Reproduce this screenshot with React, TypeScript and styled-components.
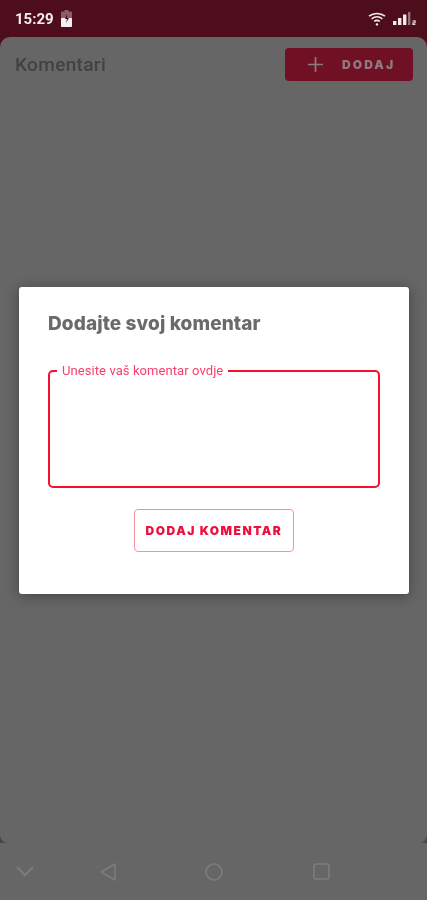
import styled, { createGlobalStyle } from 'styled-components'

const GlobalStyle = createGlobalStyle`
  html, body {
    margin: 0;
    padding: 0;
    background: #666666;
  }
`

const Screen = styled.div`
  position: relative;
  display: flex;
  flex-direction: column;
  width: 427px;
  height: 900px;
  overflow: hidden;
  font-family: Roboto, 'Liberation Sans', sans-serif;
  background: #666666;
`

const StatusBar = styled.div`
  display: flex;
  align-items: center;
  justify-content: space-between;
  flex: none;
  height: 37px;
  padding: 0 11px 0 15px;
  box-sizing: border-box;
  background: #4e0d1c;
`

const StatusGroup = styled.div<{ gap: number }>`
  display: flex;
  align-items: center;
  gap: ${(p) => p.gap}px;
  filter: blur(0.5px);
`

const Time = styled.span`
  font-size: 15px;
  font-weight: 700;
  color: #f4eef0;
`

const PageSlot = styled.div`
  flex: none;
  height: 806px;
  background: linear-gradient(#4e0d1c 50%, #474747 50%);
`

const Page = styled.div`
  height: 100%;
  border-radius: 10px 10px 8px 8px;
  background: #666666;
`

const Header = styled.div`
  display: flex;
  align-items: center;
  justify-content: space-between;
  padding: 11px 14px 0 15px;
  filter: blur(0.6px);
`

const Title = styled.h1`
  margin: 0;
  font-size: 19px;
  font-weight: 500;
  letter-spacing: 0.35px;
  color: #424242;
`

const AddButton = styled.div`
  display: flex;
  align-items: center;
  width: 128px;
  height: 33px;
  padding-left: 23px;
  gap: 19px;
  box-sizing: border-box;
  border-radius: 4px;
  background: #6f1025;
`

const AddLabel = styled.span`
  font-family: Inter, sans-serif;
  font-size: 12px;
  font-weight: 900;
  letter-spacing: 2.1px;
  color: #8f7a80;
`

const NavBar = styled.div`
  display: grid;
  grid-template-columns: 84px 105px 108px auto;
  align-items: center;
  flex: 1;
  padding: 0 0 0 16px;
  filter: blur(0.5px);
`

const Overlay = styled.div`
  position: absolute;
  top: 287px;
  left: 19px;
`

const Dialog = styled.div`
  display: flex;
  flex-direction: column;
  width: 390px;
  height: 307px;
  padding: 26px 29px 0;
  box-sizing: border-box;
  border-radius: 3px;
  background: #ffffff;
  box-shadow: 0 2px 14px rgba(0, 0, 0, 0.35);
`

const DialogTitle = styled.h2`
  margin: 0;
  font-family: Inter, sans-serif;
  font-size: 19px;
  line-height: 22px;
  font-weight: 800;
  letter-spacing: 0.1px;
  color: #6a6a6a;
  filter: blur(0.5px);
`

const Field = styled.fieldset`
  flex: none;
  width: 332px;
  height: 124px;
  margin: 29px 0 0;
  padding: 0 0 0 7px;
  box-sizing: border-box;
  border: 2px solid #f90f2e;
  border-radius: 5px;
`

const FieldLabel = styled.legend`
  padding: 0 5px;
  font-size: 13px;
  line-height: 14px;
  letter-spacing: 0.08px;
  color: #f8406a;
  filter: blur(0.4px);
`

const SubmitButton = styled.div`
  display: flex;
  align-items: center;
  justify-content: center;
  align-self: center;
  width: 160px;
  height: 43px;
  margin-top: 21px;
  box-sizing: border-box;
  border: 1px solid #fb8fa2;
  border-radius: 4px;
`

const SubmitLabel = styled.span`
  font-family: Inter, sans-serif;
  font-size: 12px;
  font-weight: 900;
  letter-spacing: 1.5px;
  color: #ee0f3c;
  filter: blur(0.4px);
`

function WifiIcon() {
  return (
    <svg width="18" height="14" viewBox="0 0 18 14" fill="none" stroke="#f2ecee" strokeWidth="1.6">
      <path d="M1 4.2C5.6 .6 12.4 .6 17 4.2" />
      <path d="M3.6 6.8C6.8 4.4 11.2 4.4 14.4 6.8" />
      <path d="M6.2 9.4C7.9 8.2 10.1 8.2 11.8 9.4" />
      <circle cx="9" cy="12.4" r="1.2" fill="#f2ecee" stroke="none" />
    </svg>
  )
}

function SignalIcon() {
  return (
    <svg width="23" height="13" viewBox="0 0 23 13" fill="#f2ecee">
      <rect x="0" y="9" width="3.4" height="4" />
      <rect x="5" y="6" width="3.4" height="7" />
      <rect x="10" y="2.5" width="3.4" height="10.5" />
      <rect x="15" y="0" width="2.4" height="13" opacity="0.45" />
      <rect x="19.5" y="8.5" width="3" height="1" />
      <rect x="21.5" y="8.5" width="1" height="2.5" />
      <rect x="19.5" y="10.5" width="3" height="1" />
      <rect x="19.5" y="10.5" width="1" height="2.5" />
      <rect x="19.5" y="12.2" width="3" height="0.8" />
    </svg>
  )
}

function BatteryIcon() {
  return (
    <svg width="11" height="17" viewBox="0 0 11 17">
      <path d="M3.5 0h4v1.5H10a1 1 0 0 1 1 1V16a1 1 0 0 1-1 1H1a1 1 0 0 1-1-1V2.500a1 1 0 0 1 1-1h2.500z" fill="#8a5f6a" />
      <rect x="0" y="8" width="11" height="9" rx="1" fill="#f4eef0" />
      <path d="M6 4 4 9h2l-1 4 3-5H6z" fill="#4e0d1c" />
    </svg>
  )
}

function PlusIcon() {
  return (
    <svg width="15" height="15" viewBox="0 0 15 15" stroke="#8f7a80" strokeWidth="1.7">
      <path d="M7.500 0v15M0 7.500h15" />
    </svg>
  )
}

const navStroke = '#7d7d7d'

function NavChevron() {
  return (
    <svg width="18" height="11" viewBox="0 0 18 11" fill="none" stroke={navStroke} strokeWidth="2">
      <path d="M1 1l8 8 8-8" />
    </svg>
  )
}

function NavBack() {
  return (
    <svg width="16" height="18" viewBox="0 0 16 18" fill="none" stroke={navStroke} strokeWidth="1.600">
      <path d="M15 1v16L1 9z" strokeLinejoin="round" />
    </svg>
  )
}

function NavHome() {
  return (
    <svg width="18" height="18" viewBox="0 0 18 18" fill="none" stroke={navStroke} strokeWidth="1.600">
      <circle cx="9" cy="9" r="8" />
    </svg>
  )
}

function NavRecent() {
  return (
    <svg width="17" height="17" viewBox="0 0 17 17" fill="none" stroke={navStroke} strokeWidth="1.600">
      <rect x="1" y="1" width="15" height="15" rx="2" />
    </svg>
  )
}

export default function App() {
  return (
    <Screen>
      <GlobalStyle />
      <StatusBar>
        <StatusGroup gap={7}>
          <Time>15:29</Time>
          <BatteryIcon />
        </StatusGroup>
        <StatusGroup gap={7}>
          <WifiIcon />
          <SignalIcon />
        </StatusGroup>
      </StatusBar>
      <PageSlot>
        <Page>
          <Header>
            <Title>Komentari</Title>
            <AddButton>
              <PlusIcon />
              <AddLabel>DODAJ</AddLabel>
            </AddButton>
          </Header>
        </Page>
      </PageSlot>
      <NavBar>
        <NavChevron />
        <NavBack />
        <NavHome />
        <NavRecent />
      </NavBar>
      <Overlay>
        <Dialog>
          <DialogTitle>Dodajte svoj komentar</DialogTitle>
          <Field>
            <FieldLabel>Unesite vaš komentar ovdje</FieldLabel>
          </Field>
          <SubmitButton>
            <SubmitLabel>DODAJ KOMENTAR</SubmitLabel>
          </SubmitButton>
        </Dialog>
      </Overlay>
    </Screen>
  )
}
